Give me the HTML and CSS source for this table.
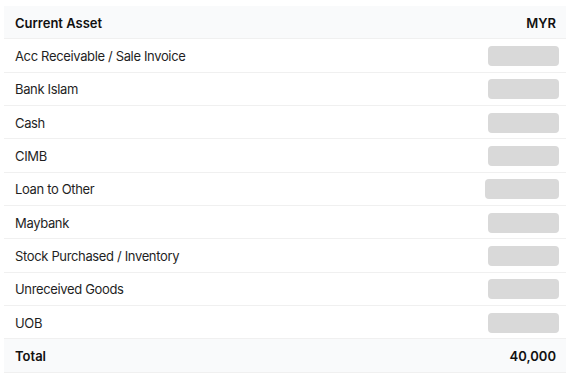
FILE: index.html
```html
<!DOCTYPE html>
<html lang="en">
<head>
	<meta charset="UTF-8">
	<meta name="viewport" content="width=device-width, initial-scale=1.0">
	<title>Current Asset</title>
	<link rel="stylesheet" href="styles.css">
</head>
<body>
	<div class="sheet">
		<div class="row head">
			<span>Current Asset</span>
			<span>MYR</span>
		</div>
		<div class="row"><span>Acc Receivable / Sale Invoice</span><span class="skeleton"></span></div>
		<div class="row"><span>Bank Islam</span><span class="skeleton"></span></div>
		<div class="row"><span>Cash</span><span class="skeleton"></span></div>
		<div class="row"><span>CIMB</span><span class="skeleton"></span></div>
		<div class="row"><span>Loan to Other</span><span class="skeleton wide"></span></div>
		<div class="row"><span>Maybank</span><span class="skeleton"></span></div>
		<div class="row"><span>Stock Purchased / Inventory</span><span class="skeleton"></span></div>
		<div class="row"><span>Unreceived Goods</span><span class="skeleton"></span></div>
		<div class="row"><span>UOB</span><span class="skeleton"></span></div>
		<div class="row head total">
			<span>Total</span>
			<span>40,000</span>
		</div>
	</div>
</body>
</html>
```

FILE: styles.css
```css
body {
	margin: 0;
	padding: 6px 7px 0 4px;
	background: #fff;
	font-family: Inter, 'Liberation Sans', sans-serif;
	font-size: 13px;
	letter-spacing: -0.35px;
	color: #1f1f1f;
}

.sheet {
	display: flex;
	flex-direction: column;
}

.row {
	display: flex;
	justify-content: space-between;
	align-items: center;
	box-sizing: border-box;
	height: 33.33px;
	padding: 1px 7px 0 11px;
	border-bottom: 1px solid #f0f0f0;
}

.head {
	background: #f9fafb;
	font-weight: 600;
	letter-spacing: 0;
	color: #111;
	padding-right: 10px;
}

/* placeholder while amounts load */
.skeleton {
	display: block;
	width: 71px;
	height: 20px;
	border-radius: 4px;
	background: #d9d9d9;
}

.skeleton.wide {
	width: 74px;
}
```
